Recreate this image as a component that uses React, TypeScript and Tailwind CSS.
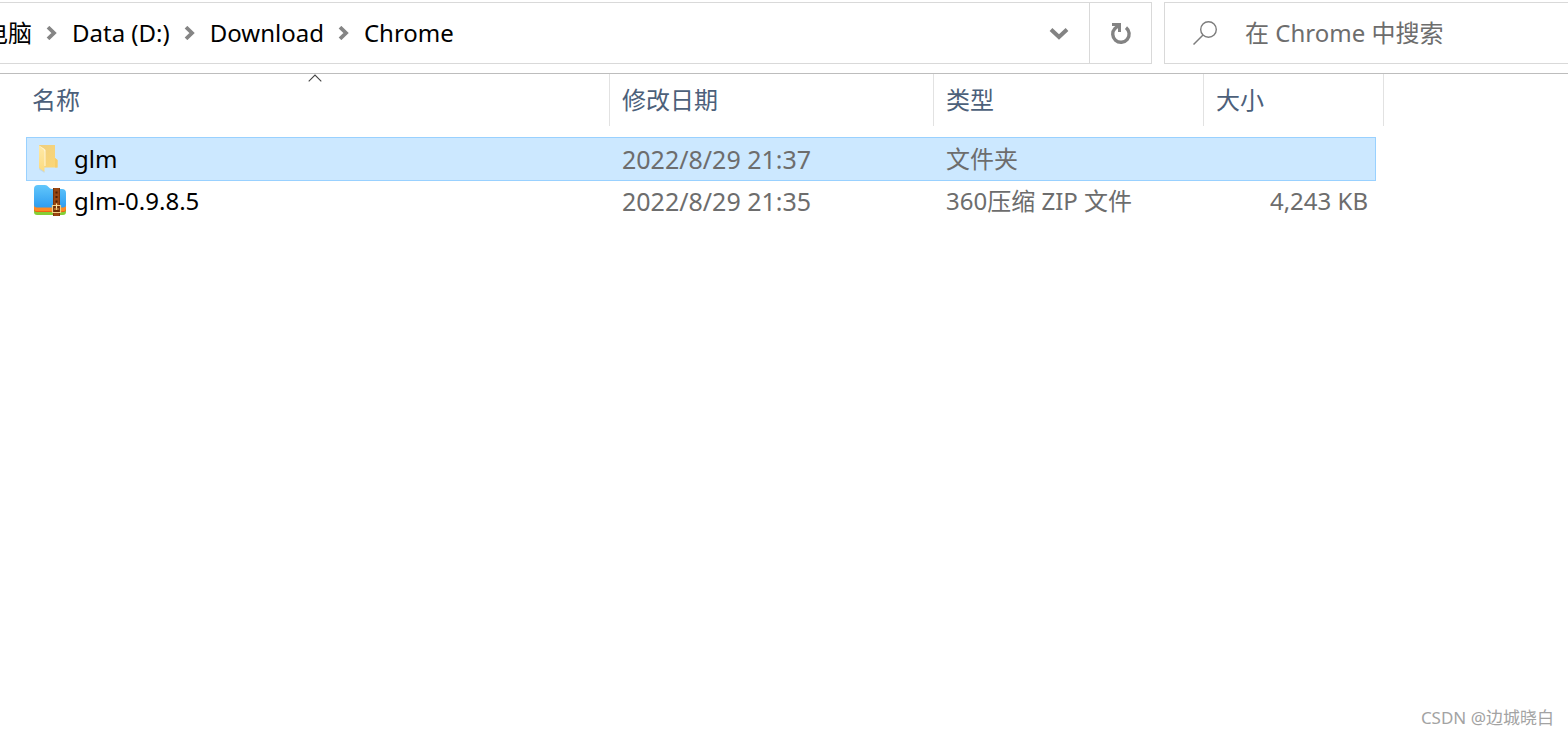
import React from "react";

type FileRow = {
  name: string;
  date: string;
  type: string;
  size: string;
  icon: React.ReactNode;
  selected?: boolean;
};

function FolderIcon() {
  return (
    <svg className="h-8 w-8 shrink-0" viewBox="0 0 32 32" aria-hidden="true">
      <defs>
        <linearGradient id="folder-back" x1="0" y1="0" x2="1" y2="1">
          <stop offset="0" stopColor="#eecf80" />
          <stop offset="1" stopColor="#fdd775" />
        </linearGradient>
        <linearGradient id="folder-front" x1="0" y1="0" x2="0" y2="1">
          <stop offset="0" stopColor="#ffe9a6" />
          <stop offset="1" stopColor="#fbdb80" />
        </linearGradient>
      </defs>
      <path d="M5 2H21V15L23.500 17V24.500H5z" fill="url(#folder-back)" />
      <path d="M21 15L23.500 17V24.500H21z" fill="#f6cd6a" />
      <path d="M5 2.500L9.800 5.500L11.500 7V23H9z" fill="#fff6d8" />
      <path d="M5 2.500L9.500 6.500Q10.500 7.500 10.500 9V29L5.500 25.500Q5 25 5 24z" fill="url(#folder-front)" />
      <path d="M5 25L10.500 28.800V30L5.500 26.800z" fill="#b9c9c9" opacity=".5" />
    </svg>
  );
}

function ZipIcon() {
  return (
    <svg className="h-8 w-8 shrink-0" viewBox="0 0 32 32" aria-hidden="true">
      <defs>
        <linearGradient id="zip-blue" x1="0" y1="0" x2="0" y2="1">
          <stop offset="0" stopColor="#62c7fb" />
          <stop offset="1" stopColor="#2f9df0" />
        </linearGradient>
      </defs>
      <path d="M0 22H32V27Q32 30 29 30H3Q0 30 0 27z" fill="#86cf35" />
      <path d="M0 18H32V24Q32 27 29 27H3Q0 27 0 24z" fill="#e8590c" />
      <path d="M0 18H32V23.500Q32 26.300 29 26.300H3Q0 26.300 0 23.500z" fill="#ff8a24" />
      <path
        d="M0 4Q0 0 4 0H11Q13 0 14.500 2T18 4H28Q32 4 32 8V19.500Q32 22.500 29 22.500H3Q0 22.500 0 19.500z"
        fill="url(#zip-blue)"
      />
      <path d="M19 3H26V31H19z" fill="#7d350a" />
      <path d="M20 3H25V31H20z" fill="#994611" />
      <path d="M21.500 6.500h2v2h-2zM21.500 11h2v2h-2zM21.500 15.500h2v2h-2z" fill="#4d1f04" />
      <path d="M18.500 20.500H26.500V27.500H18.500z" fill="#6d2c05" stroke="#f4cf85" strokeWidth="1.200" />
      <path d="M22.500 18.500V25" stroke="#ffe2a0" strokeWidth="1.200" />
      <path d="M20 24H25" stroke="#e2a552" strokeWidth="1" />
    </svg>
  );
}

function CrumbArrow() {
  return (
    <svg className="mx-[13px] h-3.5 w-3.5 shrink-0" viewBox="0 0 14 14" aria-hidden="true">
      <path d="M3 1.200L9 7L3 12.800" fill="none" stroke="#858585" strokeWidth="3.800" />
    </svg>
  );
}

const crumbs = ["电脑", "Data (D:)", "Download", "Chrome"];

const rows: FileRow[] = [
  { name: "glm", date: "2022/8/29 21:37", type: "文件夹", size: "", icon: <FolderIcon />, selected: true },
  { name: "glm-0.9.8.5", date: "2022/8/29 21:35", type: "360压缩 ZIP 文件", size: "4,243 KB", icon: <ZipIcon /> },
];

function AddressBar() {
  return (
    <div className="flex h-[62px] min-w-0 flex-1 border border-l-0 border-[#d9d9d9]">
      <nav aria-label="路径" className="flex min-w-0 flex-1 items-center overflow-hidden">
        <ol className="-ml-4 flex items-center">
          {crumbs.map((crumb, i) => (
            <li key={crumb} className="flex items-center whitespace-nowrap">
              {i > 0 && <CrumbArrow />}
              <a href="#" className="text-black">
                {crumb}
              </a>
            </li>
          ))}
        </ol>
      </nav>
      <button aria-label="以前的位置" className="flex w-[60px] items-center justify-center">
        <svg className="h-5 w-5" viewBox="0 0 20 20" aria-hidden="true">
          <path d="M2 6.500L10 14L18 6.500" fill="none" stroke="#838383" strokeWidth="4" />
        </svg>
      </button>
      <button
        aria-label="刷新"
        className="flex w-[62px] items-center justify-center border-l border-[#d9d9d9]"
      >
        <svg className="h-6 w-6" viewBox="0 0 24 24" aria-hidden="true">
          <path d="M17 6.600A8.200 8.200 0 1 1 6 7.400L9.500 4.500" fill="none" stroke="#838383" strokeWidth="3.400" />
          <path d="M3 2H12V11H9V5H3z" fill="#838383" />
        </svg>
      </button>
    </div>
  );
}

function SearchBox() {
  return (
    <label className="flex h-[62px] w-[404px] items-center border border-r-0 border-[#d9d9d9] pl-7">
      <svg className="h-6 w-6 shrink-0" viewBox="0 0 24 24" aria-hidden="true">
        <circle cx="15.500" cy="8.500" r="7.800" fill="none" stroke="#7d7d7d" strokeWidth="1.400" />
        <path d="M10 14L0.500 23.500" stroke="#7d7d7d" strokeWidth="1.500" />
      </svg>
      <input
        type="text"
        aria-label="搜索"
        placeholder="在 Chrome 中搜索"
        className="ml-7 h-8 min-w-0 flex-1 bg-transparent text-[#6d6d6d] outline-none placeholder:text-[#6d6d6d]"
      />
    </label>
  );
}

function HeaderCell({ label, span, sorted }: { label: string; span?: number; sorted?: boolean }) {
  return (
    <th colSpan={span} scope="col" aria-sort={sorted ? "ascending" : undefined} className="p-0 pb-[11px] font-normal">
      <button className="relative flex h-[52px] w-full items-center border-r border-[#e2e2e2] pl-3 text-left text-[#4c607a]">
        {sorted && (
          <svg className="absolute inset-x-0 top-0 mx-auto h-2 w-3.5" viewBox="0 0 14 8" aria-hidden="true">
            <path d="M0.700 7.300L7 1L13.300 7.300" fill="none" stroke="#444" strokeWidth="1.100" />
          </svg>
        )}
        {label}
      </button>
    </th>
  );
}

function FileTable() {
  return (
    <table className="ml-5 w-[1364px] table-fixed border-separate border-spacing-0">
      <colgroup>
        <col className="w-[6px]" />
        <col className="w-[584px]" />
        <col className="w-[324px]" />
        <col className="w-[270px]" />
        <col className="w-[172px]" />
        <col className="w-[8px]" />
      </colgroup>
      <thead>
        <tr>
          <HeaderCell label="名称" span={2} sorted />
          <HeaderCell label="修改日期" />
          <HeaderCell label="类型" />
          <HeaderCell label="大小" span={2} />
        </tr>
      </thead>
      <tbody>
        {rows.map((row) => {
          const tone = row.selected ? "h-11 border-y border-[#99d1ff] bg-[#cce8ff]" : "h-10";
          return (
            <tr key={row.name} aria-selected={!!row.selected} className="text-[#6d6d6d]">
              <td className="p-0" />
              <td className={`${tone} p-0 ${row.selected ? "border-l pl-[7px]" : "pl-2"}`}>
                <div className="flex items-center gap-2 text-black">
                  {row.icon}
                  {row.name}
                </div>
              </td>
              <td className={`${tone} p-0 pl-3 text-[25px]`}>{row.date}</td>
              <td className={`${tone} p-0 pl-3`}>{row.type}</td>
              <td className={`${tone} p-0 pr-2 text-right ${row.selected ? "border-r" : ""}`}>{row.size}</td>
              <td className="p-0" />
            </tr>
          );
        })}
      </tbody>
    </table>
  );
}

export default function App() {
  return (
    <div className="flex min-h-screen flex-col overflow-hidden bg-white font-['Noto_Sans','Noto_Sans_CJK_SC',sans-serif] text-[24px] leading-8">
      <header className="flex gap-3 border-b border-[#bdbdbd] pt-0.5 pb-[9px]">
        <AddressBar />
        <SearchBox />
      </header>
      <main>
        <FileTable />
      </main>
      <footer className="mt-auto flex justify-end pr-3.5 pb-1.5 text-[17px] leading-6 text-[#a3a3a3]">
        CSDN @边城晓白
      </footer>
    </div>
  );
}
